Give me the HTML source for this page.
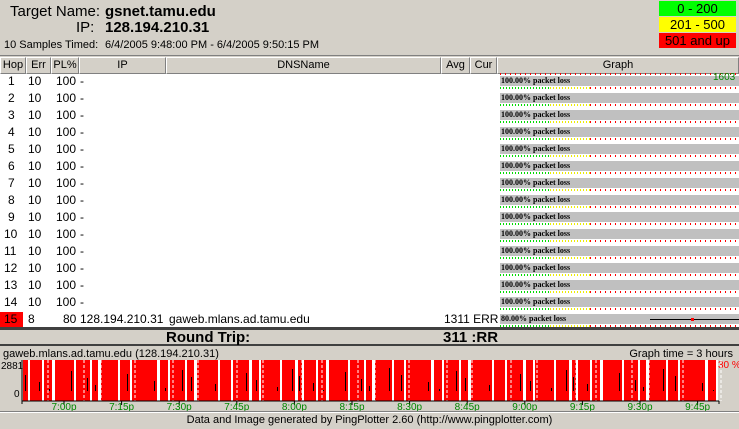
<!DOCTYPE html>
<html><head><meta charset="utf-8"><style>
*{margin:0;padding:0;box-sizing:border-box}
body{width:739px;height:429px;background:#d4d0c8;font-family:"Liberation Sans",sans-serif;font-size:11px;position:relative;overflow:hidden;color:#000}
.a{position:absolute;white-space:nowrap}
.hd{position:absolute;top:57px;height:17px;background:#d4d0c8;border-right:1px solid #808080;border-bottom:1px solid #808080;border-top:1px solid #fff;border-left:1px solid #fff;text-align:center;line-height:15px;font-size:11px}
</style></head><body>
<div class="a" style="left:0;top:0;width:739px;height:56px;border-bottom:1px solid #808080"></div>
<div class="a" style="left:10px;top:3px;font-size:15px">Target Name:</div>
<div class="a" style="left:105px;top:3px;font-size:15px;font-weight:bold">gsnet.tamu.edu</div>
<div class="a" style="left:76px;top:19px;font-size:15px">IP:</div>
<div class="a" style="left:105px;top:19px;font-size:15px;font-weight:bold">128.194.210.31</div>
<div class="a" style="left:4px;top:39px;font-size:11px">10 Samples Timed:</div>
<div class="a" style="left:105px;top:39px;font-size:11px">6/4/2005 9:48:00 PM - 6/4/2005 9:50:15 PM</div>
<div class="a" style="left:659px;top:1px;width:77px;height:15px;background:#00ff00;text-align:center;font-size:13px;line-height:15px">0 - 200</div>
<div class="a" style="left:659px;top:17px;width:77px;height:15px;background:#ffff00;text-align:center;font-size:13px;line-height:15px">201 - 500</div>
<div class="a" style="left:659px;top:33px;width:77px;height:15px;background:#ff0000;text-align:center;font-size:13px;line-height:15px">501 and up</div>

<div class="hd" style="left:0;width:26px">Hop</div>
<div class="hd" style="left:26px;width:25px">Err</div>
<div class="hd" style="left:51px;width:28px">PL%</div>
<div class="hd" style="left:79px;width:87px">IP</div>
<div class="hd" style="left:166px;width:275px">DNSName</div>
<div class="hd" style="left:441px;width:29px">Avg</div>
<div class="hd" style="left:470px;width:27px">Cur</div>
<div class="hd" style="left:497px;width:242px">Graph</div>

<div class="a" style="left:0;top:74px;width:739px;height:254px;background:#fff"></div>
<div class="a" style="left:0;top:312px;width:23px;height:16px;background:#ff0000"></div>
<div id="rows"></div>
<div class="a" style="left:0;top:327px;width:739px;height:3px;background:#404040"></div>
<div class="a" style="left:0;top:330px;width:739px;height:16px;background:#d4d0c8;border-bottom:2px solid #404040"></div>
<div class="a" style="left:166px;top:329px;font-size:15px;font-weight:bold">Round Trip:</div>
<div class="a" style="left:443px;top:329px;font-size:15px;font-weight:bold">311 :RR</div>
<div class="a" style="left:3px;top:348px;font-size:11px">gaweb.mlans.ad.tamu.edu (128.194.210.31)</div>
<div class="a" style="right:6px;top:348px;font-size:11px">Graph time = 3 hours</div>
<div class="a" style="left:1px;top:361px;font-size:10px">2881</div>
<div class="a" style="left:14px;top:389px;font-size:10px">0</div>
<div class="a" style="left:718px;top:360px;font-size:10px;color:#f00">30 %</div>
<svg class="a" style="left:0;top:358px" width="739" height="56" id="ch"></svg>
<div class="a" style="left:0;top:412px;width:739px;height:1px;background:#fff"></div>
<div class="a" style="left:0;top:411px;width:739px;height:1px;background:#808080"></div>
<div class="a" style="left:0;top:414px;width:739px;text-align:center;font-size:11px">Data and Image generated by PingPlotter 2.60 (http://www.pingplotter.com)</div>
<script>
var h='';
for(var i=1;i<=15;i++){var t=75+(i-1)*17;var last=i==15;
h+='<div class="a" style="left:'+(i<10?8:4)+'px;top:'+(t-1)+'px;font-size:12px">'+i+'</div>';
h+='<div class="a" style="left:28px;top:'+(t-1)+'px;font-size:12px">'+(last?'8':'10')+'</div>';
h+='<div class="a" style="left:'+(last?63:56)+'px;top:'+(t-1)+'px;font-size:12px">'+(last?'80':'100')+'</div>';
h+='<div class="a" style="left:80px;top:'+(t-1)+'px;font-size:12px">'+(last?'128.194.210.31':'-')+'</div>';
if(last){h+='<div class="a" style="left:169px;top:'+(t-1)+'px;font-size:12px">gaweb.mlans.ad.tamu.edu</div><div class="a" style="left:444px;top:'+(t-1)+'px;font-size:12px">1311 ERR</div>';}
h+='<div class="a" style="left:500px;top:'+(t+1)+'px;width:239px;height:10px;background:#c0c0c0"></div>';
h+='<div class="a" style="left:500px;top:'+(t+12)+'px;width:50px;height:2px;background:repeating-linear-gradient(90deg,#0d0 0 1px,transparent 1px 3px)"></div>';
h+='<div class="a" style="left:550px;top:'+(t+12)+'px;width:40px;height:2px;background:repeating-linear-gradient(90deg,#ee0 0 1px,transparent 1px 3px)"></div>';
h+='<div class="a" style="left:590px;top:'+(t+12)+'px;width:149px;height:2px;background:repeating-linear-gradient(90deg,#f00 0 1px,transparent 1px 5px)"></div>';
h+='<div class="a" style="left:501px;top:'+(t+1)+'px;font-family:\'Liberation Serif\',serif;font-size:8px;font-weight:bold;line-height:10px">'+(last?'80.00%':'100.00%')+' packet loss</div>';
}
h+='<div class="a" style="left:500px;top:73px;width:239px;height:2px;background:repeating-linear-gradient(90deg,#f00 0 1px,transparent 1px 5px)"></div>';
h+='<div class="a" style="left:713px;top:72px;font-size:10px;color:#080">1603</div>';
h+='<div class="a" style="left:650px;top:319px;width:89px;height:1px;background:#000"></div><div class="a" style="left:691px;top:318px;width:3px;height:3px;background:#f00"></div>';
document.getElementById('rows').innerHTML=h;
var s='<rect x="23" y="2" width="695" height="41" fill="#f00"/>';
var x=23,k=0;var ws=[5,12,8,20,14,6,18,10,25,9,15,7,22,11,16,8,19,13];
while(x<716){var w=ws[k%ws.length];x+=w;k++;if(x>716)break;s+='<rect x="'+x+'" y="2" width="'+(k%3==0?3:2)+'" height="41" fill="#fff"/>';
if(k%2==0)s+='<line x1="'+(x+Math.round(w/2))+'" y1="2" x2="'+(x+Math.round(w/2))+'" y2="43" stroke="#fff" stroke-dasharray="3,2" stroke-width="1"/>';
s+='<rect x="'+(x-3)+'" y="'+(10+(k*7)%25)+'" width="1" height="'+(33-(10+(k*7)%25))+'" fill="#000"/>';x+=2;}
s+='<line x1="22" y1="43" x2="719" y2="43" stroke="#000"/><line x1="22" y1="2" x2="22" y2="46" stroke="#000"/><line x1="719" y1="43" x2="719" y2="46" stroke="#000"/>';
var lab=['7:00p','7:15p','7:30p','7:45p','8:00p','8:15p','8:30p','8:45p','9:00p','9:15p','9:30p','9:45p'];
for(var j=0;j<12;j++){var lx=64+j*57.6;s+='<line x1="'+lx+'" y1="43" x2="'+lx+'" y2="47" stroke="#000"/><text x="'+lx+'" y="52" font-size="10" fill="#080" text-anchor="middle" font-family="Liberation Sans">'+lab[j]+'</text>';}
document.getElementById('ch').innerHTML=s;
</script>
</body></html>
